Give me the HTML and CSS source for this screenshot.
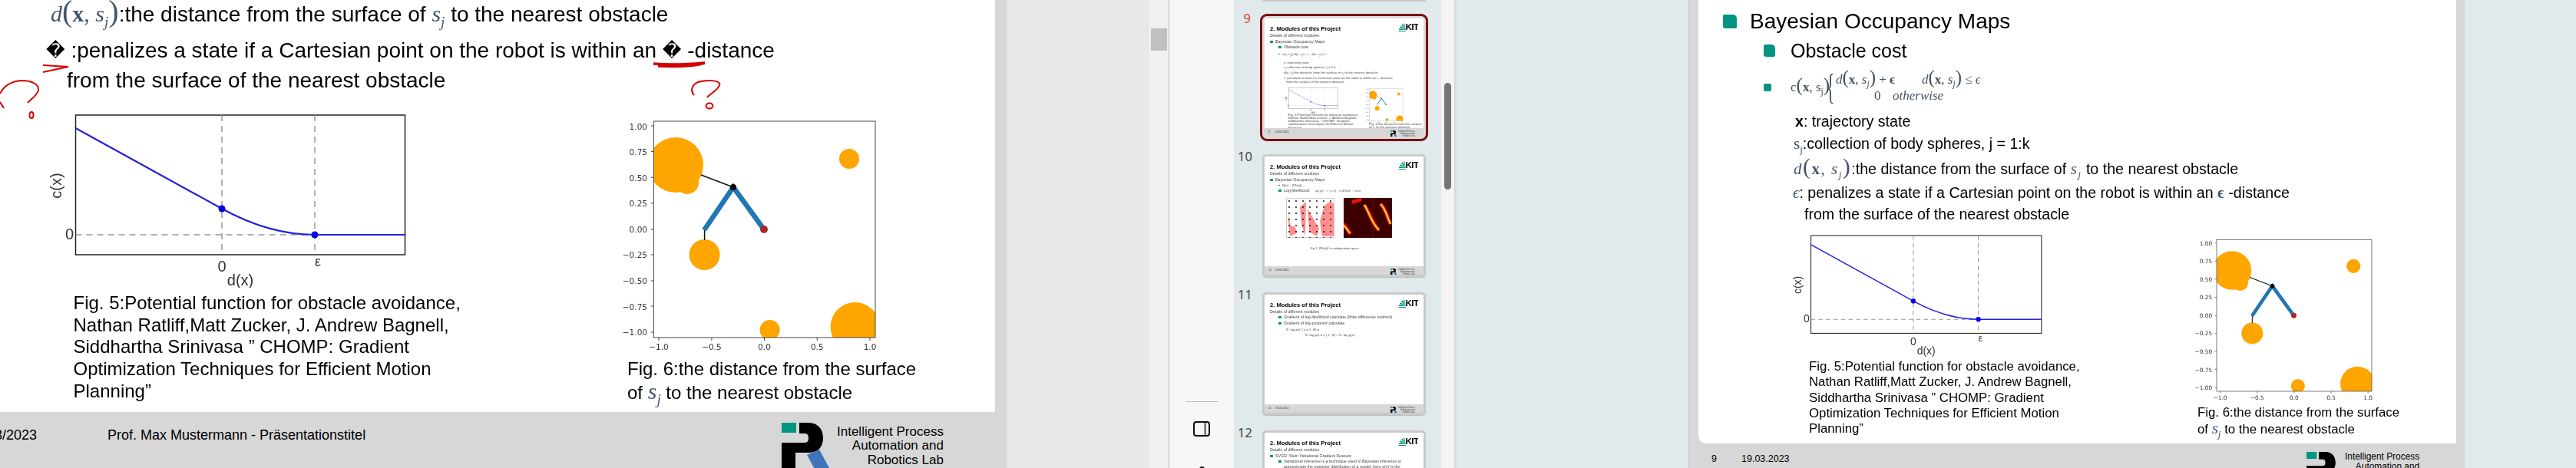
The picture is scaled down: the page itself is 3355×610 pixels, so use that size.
FILE: index.html
```html
<!DOCTYPE html>
<html lang="en">
<head>
<meta charset="utf-8">
<title>Slides</title>
<link rel="stylesheet" href="styles.css">
</head>
<body>
<svg class="defs" width="0" height="0" aria-hidden="true">
  <defs>
    <clipPath id="clip6"><rect x="851.4" y="158" width="288.6" height="282"/></clipPath>
    <pattern id="dots" width="9" height="8" patternUnits="userSpaceOnUse"><circle cx="4" cy="4" r="1" fill="#111"/></pattern>
    <g id="fig5">
      <rect x="98.5" y="150" width="429" height="182" fill="#fff" stroke="#222" stroke-width="1.5"/>
      <path d="M289 150V332M410 150V332M98.5 306H527" fill="none" stroke="#999" stroke-width="1.5" stroke-dasharray="8 6"/>
      <path d="M98.5 167L289 272Q351 306 410 306H527.5" fill="none" stroke="#2222dd" stroke-width="2.2"/>
      <circle cx="289" cy="272" r="4.5" fill="#0000e6"/>
      <circle cx="410" cy="306" r="4.5" fill="#0000e6"/>
      <text class="cl" x="96" y="312" text-anchor="end">0</text>
      <text class="cl" x="289" y="354" text-anchor="middle">0</text>
      <text class="cl-s" x="414" y="347" text-anchor="middle">ε</text>
      <text class="cl" x="313" y="372" text-anchor="middle">d(x)</text>
      <text class="cl" transform="translate(80 242) rotate(-90)" text-anchor="middle">c(x)</text>
    </g>
    <g id="fig6">
      <rect x="851.4" y="158" width="288.6" height="282" fill="#fff"/>
      <g clip-path="url(#clip6)" fill="#ffa500">
        <circle cx="880" cy="215" r="36"/>
        <circle cx="895" cy="238" r="15"/>
        <circle cx="1106" cy="207" r="13"/>
        <circle cx="917.6" cy="332" r="20"/>
        <circle cx="1002.6" cy="430" r="13"/>
        <circle cx="1113.6" cy="426" r="32"/>
      </g>
      <path d="M913 228L955 244M917.6 300V313" stroke="#111" stroke-width="1.5" fill="none"/>
      <path d="M917 300L955 244L995 299" stroke="#1f77b4" stroke-width="6.5" fill="none"/>
      <circle cx="955" cy="244" r="4" fill="#000"/>
      <circle cx="995" cy="299" r="5" fill="#a52a2a"/>
      <rect x="851.4" y="158" width="288.6" height="282" fill="none" stroke="#444" stroke-width="1"/>
      <path d="M848 164h3.4M848 197.600h3.400M848 231.200h3.400M848 264.800h3.400M848 299h3.400M848 332h3.400M848 366h3.400M848 399h3.400M848 433h3.400M858 440v4M926.900 440v4M995.500 440v4M1064.300 440v4M1133 440v4" stroke="#444" stroke-width="1" fill="none"/>
      <g class="tick" text-anchor="end">
        <text x="843" y="169">1.00</text><text x="843" y="202">0.75</text><text x="843" y="236">0.50</text><text x="843" y="269">0.25</text><text x="843" y="303">0.00</text><text x="843" y="336">−0.25</text><text x="843" y="370">−0.50</text><text x="843" y="404">−0.75</text><text x="843" y="437">−1.00</text>
      </g>
      <g class="tick" text-anchor="middle">
        <text x="858" y="456">−1.0</text><text x="926.900" y="456">−0.5</text><text x="995.500" y="456">0.0</text><text x="1064.300" y="456">0.5</text><text x="1133" y="456">1.0</text>
      </g>
    </g>
    <g id="logo">
      <rect x="1018" y="551" width="19" height="13" fill="#009682"/>
      <path d="M1041 551H1053C1066 551 1072 560 1072 571C1072 582 1066 590 1053 590H1036V628H1018V577H1048C1052 577 1053 574 1053 571C1053 568 1052 565 1048 565H1041Z" fill="#000"/>
      <path d="M1051 593L1067 586L1090 628H1070Z" fill="#3f74b8"/>
    </g>
    <g id="kit">
      <path d="M20 20L2 20L3 16ZM20 20L4 14L6 10ZM20 20L8 8L11 5ZM20 20L13 4L16 3ZM1 22H20V24H1Z" fill="#009682"/>
      <text class="kit-word" x="19" y="20">KIT</text>
    </g>
  </defs>
</svg>

<section class="doc doc-left">
  <div class="sheet sheet-left">
    <p class="big first"><span class="math"><i>d</i><span class="paren">(</span><b>x</b>, <i>s<sub>j</sub></i><span class="paren">)</span></span>:the distance from the surface of <span class="math"><i>s<sub>j</sub></i></span> to the nearest obstacle</p>
    <p class="big second"><span class="tofu">�</span> :penalizes a state if a Cartesian point on the robot is within an <span class="tofu">�</span> -distance</p>
    <p class="big third">from the surface of the nearest obstacle</p>
    <div class="figs figs-left">
      <figure class="fig fig-a">
        <svg class="chart-a" viewBox="62 140 478 235"><use href="#fig5"/></svg>
        <figcaption class="cap cap-a">Fig. 5:Potential function for obstacle avoidance,<br>Nathan Ratliff,Matt Zucker, J. Andrew Bagnell,<br>Siddhartha Srinivasa ” CHOMP: Gradient<br>Optimization Techniques for Efficient Motion<br>Planning”</figcaption>
      </figure>
      <figure class="fig fig-b">
        <svg class="chart-b" viewBox="800 150 350 312"><use href="#fig6"/></svg>
        <figcaption class="cap cap-b">Fig. 6:the distance from the surface<br>of <span class="math"><i>s<sub>j</sub></i></span> to the nearest obstacle</figcaption>
      </figure>
    </div>
    <svg class="ink" viewBox="0 0 1296 537" aria-hidden="true">
      <path d="M56 85L89 87L56 94" />
      <path d="M0 122C5 112 15 106 28 105C42 105 51 110 50 118C47 126 40 129 36 134" />
      <path d="M0 133L5 141" />
      <ellipse cx="41" cy="150" rx="2.500" ry="4" />
      <path class="thick" d="M851 83C870 85 895 84 918 82C905 86 880 87 857 86" />
      <path d="M904 124C898 117 902 108 913 106C925 104 937 105 937.500 110C935 118 926 121 921 127" />
      <ellipse cx="924" cy="138" rx="4.500" ry="3.500" />
    </svg>
  </div>
  <footer class="foot foot-left">
    <span class="date-left">19/03/2023</span>
    <span class="foot-title">Prof. Max Mustermann - Präsentationstitel</span>
    <div class="brand brand-left">
      <svg class="logo-left" viewBox="1018 551 72 77"><use href="#logo"/></svg>
      <p class="brand-text">Intelligent Process<br>Automation and<br>Robotics Lab</p>
    </div>
  </footer>
</section>

<div class="gutter"></div>

<aside class="vscroll"><div class="vthumb"></div></aside>

<nav class="rail">
  <hr class="rail-line">
  <svg class="rail-icon" viewBox="0 0 22 20"><rect x="1" y="1" width="20" height="18" rx="3" fill="none" stroke="#111" stroke-width="2"/><path d="M15.500 1V19" stroke="#111" stroke-width="1.500"/></svg>
  <span class="rail-dot"></span>
</nav>

<section class="thumbs">
  <div class="thumb-tail"></div>

  <article class="row">
    <span class="num num-on">9</span>
    <div class="thumb thumb-on">
      <div class="t-page">
        <header class="t-head"><div class="t-titles"><h3 class="t-title">2. Modules of this Project</h3></div><svg class="t-kit" viewBox="0 0 52 25"><use href="#kit"/></svg></header>
        <p class="t-sub">Details of different modules</p>
        <p class="t-l l1 mt3"><span class="t-b"></span>Bayesian Occupancy Maps</p>
        <p class="t-l l2 mt2"><span class="t-b"></span>Obstacle cost</p>
        <p class="t-l l2 mt4 t-tiny"><span class="t-b t-b-s"></span>c(x, s<sub>j</sub>){ d(x, s<sub>j</sub>) + ϵ &nbsp; d(x, s<sub>j</sub>) ≤ ϵ</p>
        <p class="t-l l3 mt6 t-tiny">x: trajectory state</p>
        <p class="t-l l3 mt1 t-tiny">s<sub>j</sub>:collection of body spheres, j = 1:k</p>
        <p class="t-l l3 mt2 t-tiny">d(x, s<sub>j</sub>):the distance from the surface of s<sub>j</sub> to the nearest obstacle</p>
        <p class="t-l l3 mt2 t-tiny">ϵ: penalizes a state if a Cartesian point on the robot is within an ϵ -distance</p>
        <p class="t-l l4 t-tiny short">from the surface of the nearest obstacle</p>
        <div class="t-figs">
          <figure class="t-fig-a">
            <svg class="t-chart-a" viewBox="62 140 478 235"><use href="#fig5"/></svg>
            <figcaption class="t-cap">Fig. 5:Potential function for obstacle avoidance,<br>Nathan Ratliff,Matt Zucker, J. Andrew Bagnell,<br>Siddhartha Srinivasa ” CHOMP: Gradient<br>Optimization Techniques for Efficient Motion<br>Planning”</figcaption>
          </figure>
          <figure class="t-fig-b">
            <svg class="t-chart-b" viewBox="800 150 350 312"><use href="#fig6"/></svg>
            <figcaption class="t-cap">Fig. 6:the distance from the surface<br>of s<sub>j</sub> to the nearest obstacle</figcaption>
          </figure>
        </div>
      </div>
      <footer class="t-foot"><span class="t-n">9</span><span class="t-d">19.03.2023</span><svg class="t-logo" viewBox="1018 551 72 77"><use href="#logo"/></svg><p class="t-brand">Intelligent Process<br>Automation and<br>Robotics Lab</p></footer>
    </div>
  </article>

  <article class="row">
    <span class="num">10</span>
    <div class="thumb">
      <div class="t-page">
        <header class="t-head"><div class="t-titles"><h3 class="t-title">2. Modules of this Project</h3></div><svg class="t-kit" viewBox="0 0 52 25"><use href="#kit"/></svg></header>
        <p class="t-sub">Details of different modules</p>
        <p class="t-l l1 mt3"><span class="t-b"></span>Bayesian Occupancy Maps</p>
        <p class="t-l l2 mt2 t-tiny"><span class="t-b t-b-s"></span>N(x) ~ |∇k(x)|...</p>
        <p class="t-l l2 mt2"><span class="t-b"></span>Log-likelihood: <span class="t-eq">−log p(z = 1 | x; θ) = α ‖∇k(x)‖² + const</span></p>
        <div class="t-heat">
          <svg class="heat" viewBox="0 0 63 52">
            <rect x=".5" y=".5" width="62" height="51" fill="#fff" stroke="#ccc"/>
            <path d="M2 20L5 50L14 46L12 38L6 36ZM18 12L26 5L25 50L20 34ZM28 14L43 40L40 50L30 44ZM44 30L50 10L58 4L62 8V50L47 50Z" fill="#ff8d8d"/>
            <rect width="63" height="52" fill="url(#dots)"/>
          </svg>
          <svg class="heat" viewBox="0 0 63 52">
            <rect width="63" height="52" fill="#3d0000"/>
            <path d="M38 0V52" stroke="#6b0000" stroke-width="1.500"/>
            <path d="M27 9C34 20 36 32 46 42M48 8C55 14 56 24 61 34M0 34C3 38 5 42 9 47M11 5C16 5 20 3 23 1" fill="none" stroke="#e0150c" stroke-width="5"/>
            <path d="M27 9C34 20 36 32 46 42M48 8C55 14 56 24 61 34M0 36C3 38 5 42 8 46" fill="none" stroke="#ffe23c" stroke-width="2"/>
          </svg>
        </div>
        <p class="t-heatcap">Fig 7: |∇k(x)|² in configuration space</p>
      </div>
      <footer class="t-foot"><span class="t-n">10</span><span class="t-d">19.03.2023</span><svg class="t-logo" viewBox="1018 551 72 77"><use href="#logo"/></svg><p class="t-brand">Intelligent Process<br>Automation and<br>Robotics Lab</p></footer>
    </div>
  </article>

  <article class="row">
    <span class="num">11</span>
    <div class="thumb">
      <div class="t-page">
        <header class="t-head"><div class="t-titles"><h3 class="t-title">2. Modules of this Project</h3></div><svg class="t-kit" viewBox="0 0 52 25"><use href="#kit"/></svg></header>
        <p class="t-sub">Details of different modules</p>
        <p class="t-l l2 mt2"><span class="t-b"></span>Gradient of log-likelihood calculate (finite difference method)</p>
        <p class="t-l l2 mt3"><span class="t-b"></span>Gradient of log-posterior calculate</p>
        <p class="t-l leq mt3 t-tiny">∇ₓ log p(x′ | z = 1; Θ) =</p>
        <p class="t-l leq2 mt2 t-tiny">∇ₓ log p(z = 1 | x′; Θ) + ∇ₓ log p(x′)</p>
      </div>
      <footer class="t-foot"><span class="t-n">11</span><span class="t-d">19.03.2023</span><svg class="t-logo" viewBox="1018 551 72 77"><use href="#logo"/></svg><p class="t-brand">Intelligent Process<br>Automation and<br>Robotics Lab</p></footer>
    </div>
  </article>

  <article class="row">
    <span class="num">12</span>
    <div class="thumb">
      <div class="t-page">
        <header class="t-head"><div class="t-titles"><h3 class="t-title">2. Modules of this Project</h3></div><svg class="t-kit" viewBox="0 0 52 25"><use href="#kit"/></svg></header>
        <p class="t-sub">Details of different modules</p>
        <p class="t-l l1 mt3"><span class="t-b"></span>SVGD :Stein Variational Gradient Descent</p>
        <p class="t-l l2 mt2"><span class="t-b"></span>Variational inference is a technique used in Bayesian inference to</p>
        <p class="t-l l2b mt2">approximate the posterior distribution of a model, here q(x) is the</p>
      </div>
    </div>
  </article>
</section>

<aside class="tscroll"><div class="tthumb"></div></aside>

<main class="desk">
  <section class="doc doc-right">
    <div class="sheet sheet-right">
      <div class="r-row r-h"><span class="bul bul-1"></span><span>Bayesian Occupancy Maps</span></div>
      <div class="r-row r-s"><span class="bul bul-2"></span><span>Obstacle cost</span></div>
      <div class="r-row r-m">
        <span class="bul bul-3"></span>
        <div class="eq">
          <span class="eq-lhs">c<span class="eq-p">(</span><b>x</b>, s<sub>j</sub><span class="eq-p">)</span></span>
          <span class="eq-brace">{</span>
          <div class="eq-grid">
            <span class="eq-a"><i>d</i><span class="eq-p">(</span><b>x</b>, <i>s<sub>j</sub></i><span class="eq-p">)</span> + <b>ϵ</b></span>
            <span><i>d</i><span class="eq-p">(</span><b>x</b>, <i>s<sub>j</sub></i><span class="eq-p">)</span> ≤ <i>ϵ</i></span>
            <span class="eq-0">0</span>
            <span class="eq-o"><i>otherwise</i></span>
          </div>
        </div>
      </div>
      <p class="r-t r-1"><b>x</b>: trajectory state</p>
      <p class="r-t r-2"><span class="math-r">s<sub>j</sub></span>:collection of body spheres, j = 1:k</p>
      <p class="r-t r-3"><span class="math-r wide"><i>d</i><span class="paren-r">(</span><b>x</b>, <i>s<sub>j</sub></i><span class="paren-r">)</span></span>:the distance from the surface of <span class="math-r wide"><i>s<sub>j</sub></i></span> to the nearest obstacle</p>
      <p class="r-t r-4"><span class="math-r"><i>ϵ</i></span>: penalizes a state if a Cartesian point on the robot is within an <span class="math-r"><b>ϵ</b></span> -distance</p>
      <p class="r-t r-5">from the surface of the nearest obstacle</p>
      <div class="figs figs-right">
        <figure class="fig fig-c">
          <svg class="chart-c" viewBox="62 140 478 235"><use href="#fig5"/></svg>
          <figcaption class="cap cap-c">Fig. 5:Potential function for obstacle avoidance,<br>Nathan Ratliff,Matt Zucker, J. Andrew Bagnell,<br>Siddhartha Srinivasa ” CHOMP: Gradient<br>Optimization Techniques for Efficient Motion<br>Planning”</figcaption>
        </figure>
        <figure class="fig fig-d">
          <svg class="chart-d" viewBox="800 150 350 312"><use href="#fig6"/></svg>
          <figcaption class="cap cap-d">Fig. 6:the distance from the surface<br>of <span class="math-r"><i>s<sub>j</sub></i></span> to the nearest obstacle</figcaption>
        </figure>
      </div>
    </div>
    <footer class="foot foot-right">
      <span class="rf-n">9</span>
      <span class="rf-d">19.03.2023</span>
      <div class="brand brand-right">
        <svg class="logo-right" viewBox="1018 551 72 77"><use href="#logo"/></svg>
        <p class="brand-text-r">Intelligent Process<br>Automation and<br>Robotics Lab</p>
      </div>
    </footer>
  </section>
</main>
</body>
</html>
```

FILE: styles.css
```css
* { box-sizing: border-box; }
html, body { margin: 0; padding: 0; }
body {
  display: flex;
  width: 3355px;
  height: 610px;
  overflow: hidden;
  font-family: "Liberation Sans", Arial, sans-serif;
  color: #000;
  background: #e8e8e8;
}
p, figure, h3 { margin: 0; }
.defs { flex: none; display: block; width: 0; height: 0; }

/* shared slide parts */
.doc { display: flex; flex-direction: column; background: #d7d7d7; flex: none; overflow: hidden; }
.sheet { position: relative; background: #fff; flex: none; }
.foot { display: flex; flex: 1; align-items: flex-start; overflow: hidden; }
.figs { display: flex; }
.fig { flex: none; }
.fig svg { display: block; }
.cl { font: 20px "Liberation Sans", sans-serif; fill: #333; }
.cl-s { font: 18px "Liberation Sans", sans-serif; fill: #333; }
.tick { font: 10.5px "DejaVu Sans", sans-serif; fill: #333; }
.kit-word { font: bold 23px "Liberation Sans", sans-serif; fill: #000; letter-spacing: -1px; }

/* left slide */
.doc-left { width: 1311px; height: 610px; }
.sheet-left { width: 1296px; height: 537px; filter: blur(.35px); }
.big { font-size: 28px; line-height: 36px; height: 36px; white-space: nowrap; }
.first { padding-left: 66px; }
.second { margin-top: 12px; padding-left: 60px; }
.third { margin-top: 3px; padding-left: 87px; }
.math { font-family: "Liberation Serif", serif; color: #44546a; font-size: 30px; }
.math sub { font-size: 19px; line-height: 0; }
.paren { font-size: 40px; font-weight: 400; line-height: 0; }
.tofu { font-family: "DejaVu Sans", sans-serif; font-size: 24px; line-height: 0; vertical-align: 1px; }
.figs-left { margin-top: 17px; }
.fig-a { width: 738px; margin-left: 62px; }
.chart-a { width: 478px; height: 235px; }
.cap { font-size: 24px; line-height: 28.7px; white-space: nowrap; }
.cap-a { margin-left: 33.5px; margin-top: 6px; }
.fig-b { width: 350px; margin-top: 10px; }
.chart-b { width: 350px; height: 312px; }
.cap-b { margin-left: 17px; margin-top: 5px; }
.ink { position: absolute; left: 0; top: 0; width: 1296px; height: 537px; pointer-events: none; }
.ink path, .ink ellipse { fill: none; stroke: #d40000; stroke-width: 2; }
.ink .thick { stroke-width: 3.5; }

.foot-left { width: 1311px; font-size: 18px; }
.date-left { margin: 20px 0 0 -42px; width: 182px; flex: none; white-space: nowrap; }
.foot-title { margin-top: 20px; flex: none; width: 878px; white-space: nowrap; }
.brand { display: flex; }
.brand-left { width: 210px; margin-top: 14px; justify-content: space-between; }
.logo-left { width: 72px; height: 77px; flex: none; }
.brand-text { font-size: 17px; line-height: 18.4px; text-align: right; padding-top: 3px; white-space: nowrap; }

/* middle chrome */
.gutter { flex: none; width: 186px; background: #e8e8e8; }
.vscroll { flex: none; width: 26px; background: #f0f0f0; border-right: 1px solid #b9b9b9; padding: 37px 2px 0; }
.vthumb { width: 21px; height: 29px; background: #c0c0c0; }
.rail { flex: none; width: 84px; height: 610px; overflow: hidden; background: #f7f7f7; display: flex; flex-direction: column; align-items: center; padding-top: 523px; }
.rail-line { flex: none; width: 42px; height: 1px; margin: 0; border: 0; background: #bdbdbd; }
.rail-icon { flex: none; width: 22px; height: 20px; margin-top: 25px; }
.rail-dot { flex: none; width: 7px; height: 7px; margin-top: 39px; border-radius: 50%; background: #111; }

/* thumbnails */
.thumbs { flex: none; width: 270px; height: 610px; background: #e0e9eb; display: flex; flex-direction: column; gap: 20px; overflow: hidden; }
.thumb-tail { flex: none; width: 213px; height: 0; margin: 0 0 0 37px; border-bottom: 1px solid #c9c9c9; box-shadow: 0 1px 1px #c9c9c9; }
.row { flex: none; display: flex; height: 160px; padding-left: 5px; gap: 15px; }
.num { flex: none; width: 17px; height: 16px; margin-top: -5px; font: 16.5px/16px "Noto Sans", sans-serif; color: #444; text-align: right; }
.num-on { color: #d9452c; }
.thumb { flex: none; width: 213px; height: 160px; border: 3px solid #cacaca; border-radius: 5px; background: #d7d7d7; display: flex; flex-direction: column; overflow: hidden; box-shadow: 0 1px 1px #bbb; filter: blur(.3px); }
.thumb-on { border-color: #dcdcdc; outline: 3px solid #7a0c12; border-radius: 6px; overflow: visible; }
.t-page { flex: none; height: 143px; background: #fff; padding: 5px 7px 0; overflow: hidden; }
.t-head { display: flex; justify-content: space-between; height: 13px; }
.t-titles { padding-top: 5px; }
.t-title { font-size: 7.6px; line-height: 8px; font-weight: bold; white-space: nowrap; }
.t-kit { width: 26px; height: 12.500px; margin-right: 0; margin-top: 0; flex: none; }
.t-sub { font-size: 5.300px; line-height: 5px; margin-top: 1.500px; color: #444; white-space: nowrap; }
.t-l { display: flex; align-items: center; height: 5px; font-size: 5.300px; line-height: 5px; color: #444; white-space: pre; }
.t-l sub { font-size: 3px; line-height: 0; }
.t-tiny { font-size: 4.300px; display: block; }
.l1 { padding-left: 0; }
.l2 { padding-left: 11px; }
.l2b { padding-left: 18px; }
.l3 { padding-left: 18px; }
.l4 { padding-left: 21px; }
.leq { padding-left: 21px; }
.leq2 { padding-left: 46px; }
.short { height: 4px; }
.mt1 { margin-top: 1px; }
.mt2 { margin-top: 2px; }
.mt3 { margin-top: 3px; }
.mt4 { margin-top: 4px; }
.mt6 { margin-top: 6px; }
.t-b { display: inline-block; flex: none; width: 4px; height: 3px; margin-right: 3px; background: #009682; }
.t-b-s { width: 2px; height: 1px; vertical-align: middle; }
.t-eq { font: italic 3.800px "Liberation Serif", serif; margin-left: 3px; }
.t-figs { display: flex; margin-top: 5px; }
.t-fig-a { width: 103.500px; margin-left: 18.500px; }
.t-fig-b { width: 60px; margin-top: 1.500px; }
.t-chart-a { display: block; width: 71.700px; height: 35px; }
.t-chart-b { display: block; width: 52.500px; height: 46.800px; }
.t-cap { font-size: 4.400px; line-height: 4.300px; color: #444; white-space: nowrap; margin-left: 5px; }
.t-fig-b .t-cap { margin-left: 7px; margin-top: -1px; }
.t-cap sub { font-size: 3px; line-height: 0; }
.t-foot { flex: 1; display: flex; align-items: flex-start; font-size: 3.500px; color: #333; padding: 3px 0 0 5px; overflow: hidden; }
.t-n { width: 9px; flex: none; }
.t-d { flex: none; width: 150px; }
.t-logo { width: 9.500px; height: 10px; flex: none; }
.t-brand { font-size: 2.600px; line-height: 3px; text-align: right; flex: none; width: 22px; color: #444; }
.t-heat { display: flex; gap: 12px; margin-top: 7px; padding-left: 20.500px; }
.heat { width: 63px; height: 52px; flex: none; display: block; }
.t-heatcap { font-size: 3.900px; line-height: 5px; margin: 11px 0 0 53px; color: #444; white-space: nowrap; }

.tscroll { flex: none; width: 20px; background: #f3f3f3; border-right: 3px solid #d5dcde; padding: 108px 0 0 4px; }
.tthumb { width: 9px; height: 139px; border-radius: 4.500px; background: #757575; }

/* right side */
.desk { flex: 1; background: #e0e9eb; padding-left: 302px; overflow: hidden; }
.doc-right { width: 1011px; height: 610px; border-left: 1px solid #c9c9c9; padding-left: 12px; }
.sheet-right { width: 987px; height: 578px; border-bottom-left-radius: 10px; filter: blur(.3px); }
.r-row { display: flex; align-items: center; white-space: nowrap; }
.r-h { font-size: 28px; height: 36px; margin-top: 10px; padding-left: 32px; }
.r-s { font-size: 25px; height: 32px; margin-top: 4px; padding-left: 85px; }
.r-m { height: 46px; margin-top: 9px; padding-left: 85px; }
.bul { flex: none; background: #009682; border-radius: 2px 5px 2px 3px; }
.bul-1 { width: 18px; height: 18px; margin-right: 17px; }
.bul-2 { width: 15px; height: 16px; margin-right: 20px; }
.bul-3 { width: 10px; height: 10px; margin-right: 25px; border-radius: 2px; }
.eq { display: flex; align-items: center; font: 17px "Liberation Serif", serif; color: #44505c; }
.eq sub { font-size: 11.500px; line-height: 0; }
.eq-p { font-size: 25px; line-height: 0; font-weight: 400; }
.eq-lhs { width: 47px; flex: none; white-space: nowrap; }
.eq-brace { font-size: 46px; line-height: 46px; font-weight: 400; transform: scaleX(.5); width: 10px; flex: none; display: flex; justify-content: center; margin-right: 2px; }
.eq-grid { display: grid; grid-template-columns: 74px 38px 90px; line-height: 21px; white-space: nowrap; }
.eq-a { grid-column: 1 / 3; }
.eq-0 { padding-left: 50px; }
.eq-o { grid-column: 2 / 4; }
.r-t { font-size: 19.600px; line-height: 28px; height: 28px; white-space: nowrap; }
.r-1 { margin-top: 7px; margin-left: 126px; }
.r-2 { margin-top: 1px; margin-left: 124px; }
.r-3 { margin-top: 5px; margin-left: 124px; }
.r-4 { margin-top: 3px; margin-left: 123px; }
.r-5 { margin-top: 0; margin-left: 138px; }
.math-r { font-family: "Liberation Serif", serif; color: #44546a; font-size: 21px; }
.math-r sub { font-size: 13px; line-height: 0; }
.wide { letter-spacing: 1.500px; }
.paren-r { font-size: 30px; line-height: 0; font-weight: 400; }
.figs-right { margin-top: 7px; }
.fig-c { width: 518px; margin-left: 120.500px; }
.chart-c { width: 334.600px; height: 164.500px; }
.cap-c { font-size: 16.800px; line-height: 20.300px; margin-left: 23.500px; margin-top: 3.500px; }
.fig-d { width: 245px; margin-top: 7.400px; }
.chart-d { width: 245px; height: 218.400px; }
.cap-d { font-size: 16.800px; line-height: 20.300px; margin-left: 11.500px; margin-top: 2px; }

.foot-right { font-size: 12.500px; padding-top: 13px; }
.rf-n { margin-left: 17px; width: 39px; flex: none; }
.rf-d { flex: none; width: 735.600px; }
.brand-right { flex: none; width: 147px; justify-content: space-between; margin-top: -2px; }
.logo-right { width: 50.400px; height: 53.900px; flex: none; }
.brand-text-r { font-size: 11.900px; line-height: 13px; text-align: right; white-space: nowrap; }
```
